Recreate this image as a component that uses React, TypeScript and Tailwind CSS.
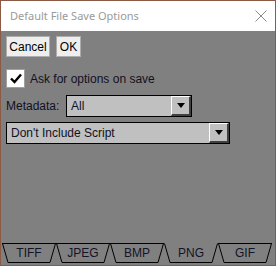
import React from "react";

const tabs = ["TIFF", "JPEG", "BMP", "PNG", "GIF"];
const ACTIVE = "PNG";

function DropArrow() {
  return (
    <div className="w-[20px] h-full bg-[#c0c0c0] border-t border-l border-t-white border-l-white border-b-2 border-r-2 border-b-[#404040] border-r-[#404040] flex items-center justify-center">
      <svg width="8" height="5" viewBox="0 0 8 5">
        <path d="M0 0 H8 L4 5 Z" fill="#000" />
      </svg>
    </div>
  );
}

function Select({ value, className }: { value: string; className: string }) {
  return (
    <div
      className={`h-[22px] bg-[#c0c0c0] border border-black flex items-stretch ${className}`}
    >
      <div className="flex-1 flex items-center pl-[4px] text-[12px] text-[#111122]">
        {value}
      </div>
      <DropArrow />
    </div>
  );
}

function Tab({ label, active }: { label: string; active: boolean }) {
  return (
    <div className="relative w-[54px] h-[20px] flex items-center justify-center text-[12px] text-[#141428]">
      <svg
        className="absolute inset-0"
        width="54"
        height="20"
        viewBox="0 0 54 20"
      >
        <polyline
          points="0.5,0.5 6,19.5 48,19.5 53.5,0.5"
          fill="none"
          stroke="#000"
          strokeWidth="1"
        />
        {!active && (
          <line x1="0" y1="0.5" x2="54" y2="0.5" stroke="#000" strokeWidth="1" />
        )}
      </svg>
      <span className="relative">{label}</span>
    </div>
  );
}

export default function App() {
  return (
    <div
      className="w-[276px] h-[266px] border border-[#8a5a44] flex flex-col"
      style={{ fontFamily: '"Liberation Sans", Arial, sans-serif' }}
    >
      {/* Title bar */}
      <div className="h-[30px] bg-white flex items-center justify-between pl-[9px] pr-[8px]">
        <span
          className="text-[11px] text-[#9a9a9a]"
          style={{ fontFamily: '"Noto Sans", sans-serif' }}
        >
          Default File Save Options
        </span>
        <svg width="12" height="12" viewBox="0 0 12 12">
          <path d="M0.5 0.5 L11.5 11.5 M11.5 0.5 L0.5 11.5" stroke="#8a8a8a" strokeWidth="1" />
        </svg>
      </div>

      {/* Body */}
      <div className="flex-1 bg-[#808080] flex flex-col pt-[5px] pb-[2px]">
        <div className="flex gap-[6px] pl-[5px]">
          <button className="w-[44px] h-[21px] bg-[#eeeeee] border border-[#adadad] text-[12px] text-black flex items-center justify-center">
            Cancel
          </button>
          <button className="w-[25px] h-[21px] bg-[#eeeeee] border border-[#adadad] text-[12px] text-black flex items-center justify-center">
            OK
          </button>
        </div>

        <div className="flex items-center gap-[5px] pl-[5px] mt-[12px]">
          <div className="w-[19px] h-[19px] bg-white border border-[#a0a0a0] flex items-center justify-center">
            <svg width="12" height="11" viewBox="0 0 12 11">
              <path d="M1 5.5 L4.5 9 L11 1.5" fill="none" stroke="#000" strokeWidth="2.4" />
            </svg>
          </div>
          <span className="text-[12px] text-[#111122]">Ask for options on save</span>
        </div>

        <div className="flex items-center pl-[5px] mt-[7px] gap-[3px]">
          <span className="text-[12px] text-[#111122] w-[57px]">Metadata:</span>
          <Select value="All" className="w-[126px]" />
        </div>

        <div className="pl-[5px] mt-[5px]">
          <Select value="Don't Include Script" className="w-[224px]" />
        </div>

        <div className="mt-auto flex pl-[1px]">
          {tabs.map((t) => (
            <Tab key={t} label={t} active={t === ACTIVE} />
          ))}
        </div>
      </div>
    </div>
  );
}
